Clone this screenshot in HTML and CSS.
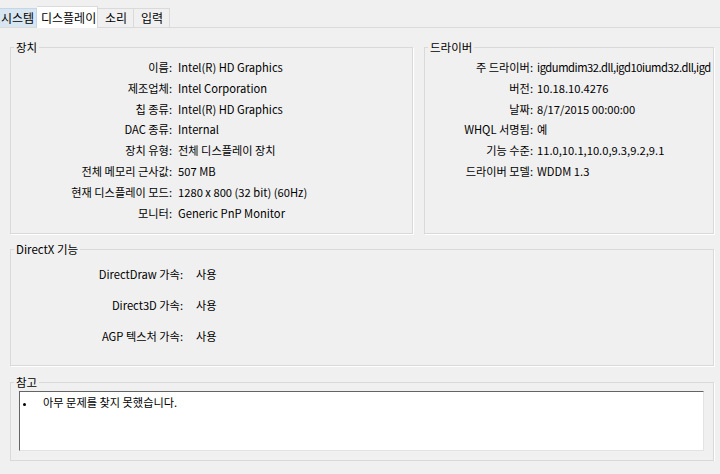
FILE: index.html
```html
<!DOCTYPE html>
<html>
<head>
  <title>DirectX 진단 도구 - 디스플레이</title>
  <link rel="stylesheet" href="styles.css">
</head>
<body>

<!-- Tab strip -->
<div class="tabs">
  <div class="tab hover">시스템</div>
  <div class="tab active">디스플레이</div>
  <div class="tab">소리</div>
  <div class="tab">입력</div>
</div>

<div class="page">

  <div class="top-row">
    <!-- Device -->
    <fieldset class="group device">
      <legend>장치</legend>
      <div class="info">
        <div class="key">이름:</div><div class="val">Intel(R) HD Graphics</div>
        <div class="key">제조업체:</div><div class="val">Intel Corporation</div>
        <div class="key">칩 종류:</div><div class="val">Intel(R) HD Graphics</div>
        <div class="key">DAC 종류:</div><div class="val">Internal</div>
        <div class="key">장치 유형:</div><div class="val">전체 디스플레이 장치</div>
        <div class="key">전체 메모리 근사값:</div><div class="val">507 MB</div>
        <div class="key">현재 디스플레이 모드:</div><div class="val">1280 x 800 (32 bit) (60Hz)</div>
        <div class="key">모니터:</div><div class="val">Generic PnP Monitor</div>
      </div>
    </fieldset>

    <!-- Driver -->
    <fieldset class="group driver">
      <legend>드라이버</legend>
      <div class="info">
        <div class="key">주 드라이버:</div><div class="val tight">igdumdim32.dll,igd10iumd32.dll,igd</div>
        <div class="key">버전:</div><div class="val">10.18.10.4276</div>
        <div class="key">날짜:</div><div class="val">8/17/2015 00:00:00</div>
        <div class="key">WHQL 서명됨:</div><div class="val">예</div>
        <div class="key">기능 수준:</div><div class="val">11.0,10.1,10.0,9.3,9.2,9.1</div>
        <div class="key">드라이버 모델:</div><div class="val">WDDM 1.3</div>
      </div>
    </fieldset>
  </div>

  <!-- DirectX features -->
  <fieldset class="group directx">
    <legend>DirectX 기능</legend>
    <div class="info">
      <div class="key">DirectDraw 가속:</div><div class="val">사용</div>
      <div class="key">Direct3D 가속:</div><div class="val">사용</div>
      <div class="key">AGP 텍스처 가속:</div><div class="val">사용</div>
    </div>
  </fieldset>

  <!-- Notes -->
  <fieldset class="group notes">
    <legend>참고</legend>
    <div class="notebox">
      <div class="note"><span class="bullet"></span>아무 문제를 찾지 못했습니다.</div>
    </div>
  </fieldset>

</div>

</body>
</html>
```

FILE: styles.css
```css
body {
  margin: 0;
  background: #f0f0f0;
  color: #000;
  font-family: "Noto Sans CJK KR", "Noto Sans", sans-serif;
  font-size: 11.2px;
}

/* Tabs */
.tabs {
  display: flex;
  padding-top: 8px;
  border-bottom: 1px solid #dadada;
  height: 19px;
}

.tab {
  box-sizing: border-box;
  width: 36px;
  line-height: 18px;
  padding-left: 7px;
  border: 1px solid #dadada;
  border-bottom: none;
  border-left: none;
  white-space: nowrap;
  font-size: 12px;
}

.tab.hover {
  width: 37px;
  padding-left: 1px;
  background: #d8e6f2;
  border-color: #c5d6e6;
}

.tab.active {
  width: 61px;
  padding-left: 4px;
  margin-top: -2px;
  height: 22px;
  line-height: 22px;
  background: #fff;
}

/* Page */
.page {
  padding: 0 6px 0 10px;
}

.top-row {
  display: flex;
  gap: 11px;
  margin-top: 12px;
}

.group {
  margin: 0;
  padding: 0;
  min-width: 0;
  border: 1px solid #d9d9d9;
  box-shadow: 1px 1px 0 #fff;
}

.group legend {
  margin-left: 3px;
  padding: 0 2px;
  line-height: 14px;
  font-size: 11.5px;
}

.device {
  width: 401px;
}

.driver {
  flex: 1;
}

.info {
  display: grid;
  align-items: center;
  line-height: 20.8px;
}

.key {
  text-align: right;
  white-space: nowrap;
}

.val {
  white-space: nowrap;
  overflow: hidden;
}

.val.tight {
  letter-spacing: -0.45px;
}

.device .info {
  grid-template-columns: 161px 1fr;
  column-gap: 6px;
  padding: 3px 0 10px;
}

.driver .info {
  grid-template-columns: 108px 1fr;
  column-gap: 4px;
  padding: 3px 0 10px;
}

.directx {
  margin-top: 8px;
}

.directx .info {
  grid-template-columns: 172px 1fr;
  column-gap: 13px;
  line-height: 31px;
  padding: 3px 0 13px;
}

.notes {
  margin-top: 9px;
}

.notebox {
  margin: 2px 9px 9px 8px;
  height: 58px;
  background: #fff;
  border-top: 1px solid #646464;
  border-left: 1px solid #646464;
  border-right: 1px solid #e3e3e3;
  border-bottom: 1px solid #e3e3e3;
}

.note {
  line-height: 20px;
  padding-left: 3px;
}

.bullet {
  display: inline-block;
  width: 3px;
  height: 3px;
  background: #000;
  border-radius: 50%;
  vertical-align: middle;
  margin-right: 17px;
}
```
